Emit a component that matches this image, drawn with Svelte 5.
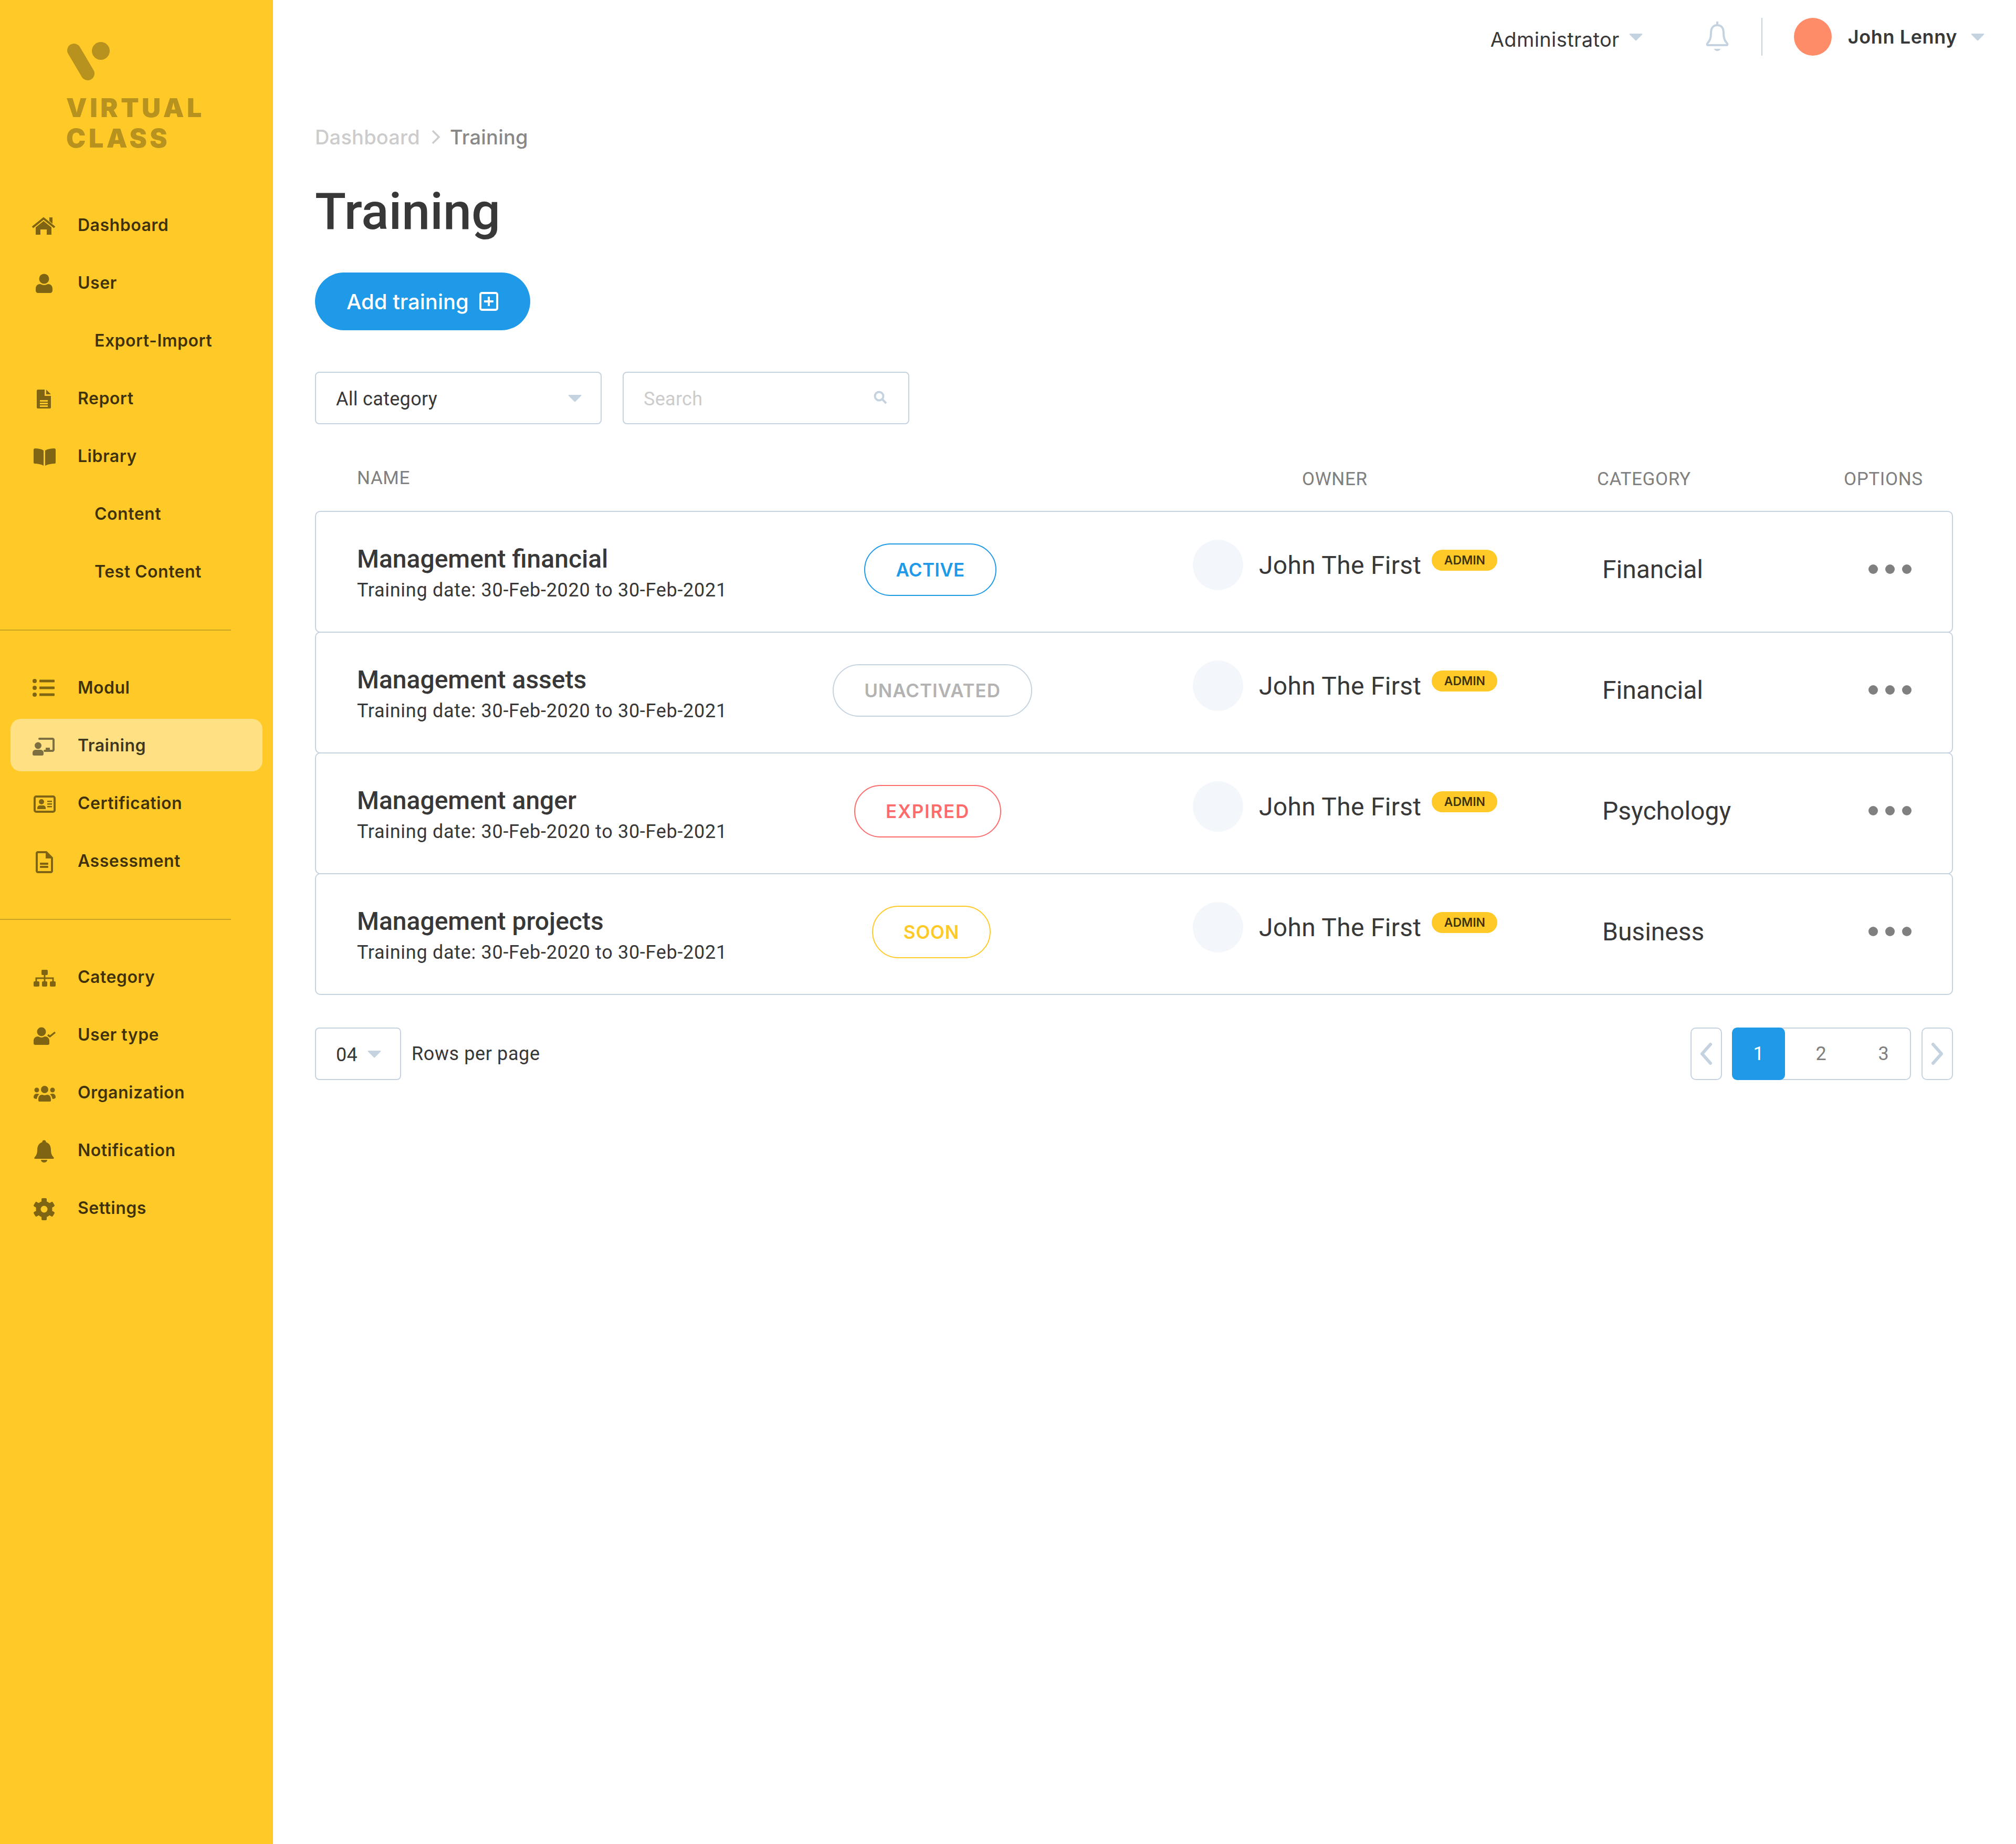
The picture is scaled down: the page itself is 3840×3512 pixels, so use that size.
<script lang="ts">
    const icons: Record<string, string> = {
        home: '<path d="M2 29 23 12l21 17" fill="none" stroke="currentColor" stroke-width="4"/><path d="M34 10h6v12l-6-5zM23 17l15 12v14H29V33H17v10H8V29z"/>',
        user: '<circle cx="24" cy="17" r="9.500"/><path d="M8 36c0-6 4-9 8-9 2 0 4 2 8 2s6-2 8-2c4 0 8 3 8 9v3c0 3-2 5-5 5H13c-3 0-5-2-5-5z"/>',
        report: '<path fill-rule="evenodd" d="M12 8h13v12h12v22c0 1-1 2-2 2H12c-1 0-2-1-2-2V10c0-1 1-2 2-2zm4 20v3h15v-3zm0 5v3h15v-3zm0 5v3h15v-3z"/><path d="M28 8l9 9h-9z"/>',
        book: '<path d="M4 13c0-2 1-3 3-3 6 0 12 1 16 4v29c-5-3-11-4-17-4-1 0-2-1-2-2zM46 13c0-2-1-3-3-3-6 0-12 1-17 4v29c6-3 12-4 18-4 1 0 2-1 2-2z"/>',
        list: '<circle cx="6" cy="12" r="4"/><circle cx="6" cy="25" r="4"/><circle cx="6" cy="38" r="4"/><rect x="15" y="9.500" width="29" height="5" rx="1"/><rect x="15" y="22.500" width="29" height="5" rx="1"/><rect x="15" y="35.500" width="29" height="5" rx="1"/>',
        training: '<circle cx="12.500" cy="25" r="6.500"/><path d="M2 39c0-4 3-6 6-6h9c3 0 6 2 6 6v2c0 2-1 3-3 3H5c-2 0-3-1-3-3z"/><path d="M15 12h25c1 0 2 1 2 2v19c0 1-1 2-2 2H25" fill="none" stroke="currentColor" stroke-width="4" stroke-linecap="round"/><rect x="27" y="29" width="8" height="6"/>',
        cert: '<rect x="6" y="12" width="38" height="29" rx="3" fill="none" stroke="currentColor" stroke-width="4"/><circle cx="19" cy="22" r="5"/><path d="M11 34c0-3 2-5 5-5h6c3 0 5 2 5 5v2H11z"/><path d="M30 20h9v2.500h-9zM30 25h9v2.500h-9zM30 30h9v2.500h-9z"/>',
        assess: '<path d="M12 8h16l11 11v25c0 1-1 2-2 2H12c-1 0-2-1-2-2V10c0-1 1-2 2-2z" fill="none" stroke="currentColor" stroke-width="4" stroke-linejoin="round"/><path d="M27 8l12 12H27z"/><rect x="16" y="28" width="16" height="4" rx="1"/><rect x="16" y="34" width="16" height="4" rx="1"/>',
        category: '<rect x="19" y="11" width="12" height="10" rx="2"/><rect x="4" y="33" width="11" height="10" rx="2"/><rect x="20" y="33" width="10" height="10" rx="2"/><rect x="35" y="33" width="11" height="10" rx="2"/><path d="M9 33v-6h32v6M25 21v12" fill="none" stroke="currentColor" stroke-width="3"/>',
        usertype: '<circle cx="19" cy="19" r="8.500"/><path d="M4 36c0-5 4-8 8-8 2 0 4 2 7 2s5-2 7-2c4 0 8 3 8 8v5c0 2-1 3-3 3H7c-2 0-3-1-3-3z"/><path d="M31 25l4 3 10-8" fill="none" stroke="currentColor" stroke-width="3.500"/>',
        org: '<circle cx="25" cy="19" r="7"/><circle cx="10" cy="20" r="4.500"/><circle cx="40" cy="20" r="4.500"/><path d="M13 38c0-6 3-9 7-9 2 0 3 1 5 1s3-1 5-1c4 0 7 3 7 9v2c0 1-1 2-2 2H15c-1 0-2-1-2-2z"/><path d="M4 34c0-4 2-7 6-7 2 0 4 1 5 1-3 2-4 5-5 9-3 0-6-1-6-3zM46 34c0-4-2-7-6-7-2 0-4 1-5 1 3 2 4 5 5 9 3 0 6-1 6-3z"/>',
        bell: '<circle cx="24" cy="9" r="3.500"/><path d="M24 9c9 0 13 7 13 15 0 7 2 11 5 14 1 1 1 3-1 3H7c-2 0-2-2-1-3 3-3 5-7 5-14 0-8 4-15 13-15z"/><path d="M18 43h12c0 3-3 5-6 5s-6-2-6-5z"/>',
        gear: '<circle cx="24" cy="27" r="11" fill="none" stroke="currentColor" stroke-width="9"/><rect x="19" y="6" width="10" height="42" rx="2"/><rect x="19" y="6" width="10" height="42" rx="2" transform="rotate(60 24 27)"/><rect x="19" y="6" width="10" height="42" rx="2" transform="rotate(120 24 27)"/><circle cx="24" cy="27" r="6.500" fill="#FFCA28"/>'
    };

    const navGroups = [
        [
            { label: 'Dashboard', icon: 'home' },
            { label: 'User', icon: 'user' },
            { label: 'Export-Import', sub: true },
            { label: 'Report', icon: 'report' },
            { label: 'Library', icon: 'book' },
            { label: 'Content', sub: true },
            { label: 'Test Content', sub: true }
        ],
        [
            { label: 'Modul', icon: 'list' },
            { label: 'Training', icon: 'training', active: true },
            { label: 'Certification', icon: 'cert' },
            { label: 'Assessment', icon: 'assess' }
        ],
        [
            { label: 'Category', icon: 'category' },
            { label: 'User type', icon: 'usertype' },
            { label: 'Organization', icon: 'org' },
            { label: 'Notification', icon: 'bell' },
            { label: 'Settings', icon: 'gear' }
        ]
    ];

    const trainings = [
        { name: 'Management financial', status: 'ACTIVE', kind: 'active', category: 'Financial' },
        { name: 'Management assets', status: 'UNACTIVATED', kind: 'unactivated', category: 'Financial' },
        { name: 'Management anger', status: 'EXPIRED', kind: 'expired', category: 'Psychology' },
        { name: 'Management projects', status: 'SOON', kind: 'soon', category: 'Business' }
    ];
</script>

{#snippet caret()}
    <svg class="caret" viewBox="0 0 28 16"><path d="M2 1h24c1 0 2 1 1 2L15 15c-.6.6-1.400.6-2 0L1 3C0 2 1 1 2 1z" /></svg>
{/snippet}

<div class="page">
    <aside class="sidebar">
        <div class="logo">
            <svg class="logo-mark" viewBox="0 0 90 80">
                <path d="M13 16 39 60" stroke="#B8921E" stroke-width="26" stroke-linecap="round" />
                <circle cx="64" cy="17" r="17" fill="#B8921E" />
            </svg>
            <div class="logo-text">VIRTUAL<br />CLASS</div>
        </div>

        {#each navGroups as group, i}
            <nav class="group" class:first={i === 0}>
                {#each group as item}
                    <div class="item" class:active={item.active} class:sub={item.sub}>
                        {#if item.icon}
                            <svg class="icon" viewBox="0 0 48 48">{@html icons[item.icon]}</svg>
                        {/if}
                        <span>{item.label}</span>
                    </div>
                {/each}
            </nav>
        {/each}
    </aside>

    <main class="main">
        <header class="topbar">
            <span class="role">Administrator</span>
            {@render caret()}
            <svg class="top-bell" viewBox="0 0 48 60" fill="none" stroke="#C5D3E0" stroke-width="4">
                <path d="M24 3v7M24 10c-9 0-12 7-12 15 0 10-2 14-7 20-1 2 0 3 1 3h36c1 0 2-1 1-3-5-6-7-10-7-20 0-8-3-15-12-15z" />
                <path d="M18 55h12c0 2-3 4-6 4s-6-2-6-4z" fill="#C5D3E0" stroke="none" />
            </svg>
            <div class="vline"></div>
            <div class="avatar"></div>
            <span class="username">John Lenny</span>
            {@render caret()}
        </header>

        <div class="crumbs">
            <span class="crumb-prev">Dashboard</span>
            <svg class="crumb-sep" viewBox="0 0 18 28" fill="none" stroke="#ccc" stroke-width="3.500"><path d="M3 2l12 12L3 26" /></svg>
            <span class="crumb-now">Training</span>
        </div>

        <h1>Training</h1>

        <button class="add">
            Add training
            <svg viewBox="0 0 36 36" fill="none" stroke="#fff" stroke-width="4"><rect x="2" y="2" width="32" height="32" rx="3" /><path d="M18 9v18M9 18h18" /></svg>
        </button>

        <div class="filters">
            <div class="field">
                <span class="value">All category</span>
                {@render caret()}
            </div>
            <div class="field search-field">
                <span class="value placeholder">Search</span>
                <svg class="search" viewBox="0 0 26 26" fill="none" stroke="#C5D3E0" stroke-width="4"><circle cx="10.500" cy="10.500" r="8" /><path d="M16.500 16.500 24 24" /></svg>
            </div>
        </div>

        <div class="thead">
            <span class="th-name">NAME</span>
            <span class="th-owner">OWNER</span>
            <span class="th-cat">CATEGORY</span>
            <span>OPTIONS</span>
        </div>

        <div class="rows">
            {#each trainings as t}
                <div class="row">
                    <div class="name-cell">
                        <div class="title">{t.name}</div>
                        <div class="date">Training date: 30-Feb-2020 to 30-Feb-2021</div>
                    </div>
                    <div class="status-cell">
                        <span class="pill {t.kind}">{t.status}</span>
                    </div>
                    <div class="owner">
                        <div class="owner-pic"></div>
                        <span class="owner-name">John The First</span>
                        <span class="tag">ADMIN</span>
                    </div>
                    <div class="category">{t.category}</div>
                    <div class="dots"><i></i><i></i><i></i></div>
                </div>
            {/each}
        </div>

        <footer class="tfoot">
            <div class="field small">
                <span class="value">04</span>
                {@render caret()}
            </div>
            <span class="rows-label">Rows per page</span>
            <div class="pager">
                <div class="arrow">
                    <svg viewBox="0 0 24 44" fill="none" stroke="#C5D3E0" stroke-width="6" stroke-linecap="round" stroke-linejoin="round"><path d="M20 4 4 22l16 18" /></svg>
                </div>
                <div class="pages">
                    <span class="num current">1</span>
                    <span class="num">2</span>
                    <span class="num">3</span>
                </div>
                <div class="arrow">
                    <svg viewBox="0 0 24 44" fill="none" stroke="#C5D3E0" stroke-width="6" stroke-linecap="round" stroke-linejoin="round"><path d="M4 4l16 18L4 40" /></svg>
                </div>
            </div>
        </footer>
    </main>
</div>

<style>
    :global(body) {
        margin: 0;
        background: #fff;
        font-family: Roboto, "Liberation Sans", sans-serif;
        color: #383838;
    }

    .page {
        display: flex;
        min-height: 3512px;
    }

    .sidebar {
        flex: 0 0 520px;
        background: #FFCA28;
    }

    .logo {
        padding: 80px 0 0 128px;
        height: 298px;
    }

    .logo-mark {
        display: block;
        width: 90px;
        height: 80px;
        overflow: visible;
    }

    .logo-text {
        margin: 16px 0 0 -2px;
        font: 900 50px/58px Inter, sans-serif;
        letter-spacing: 5.500px;
        color: #B8921E;
    }

    .group {
        padding: 59px 20px 62px;
        display: flex;
        flex-direction: column;
        gap: 10px;
        position: relative;
    }

    .group + .group::before {
        content: "";
        position: absolute;
        top: -1px;
        left: 0;
        width: 440px;
        height: 2px;
        background: #C9A227;
    }

    .group.first {
        padding-top: 0;
    }

    .item {
        height: 100px;
        display: flex;
        align-items: center;
        border-radius: 20px;
        padding-left: 40px;
        font: 600 32px Inter, sans-serif;
        letter-spacing: 0.5px;
        color: rgba(0, 0, 0, 0.76);
    }

    .item.sub {
        padding-left: 160px;
    }

    .item.active {
        background: #FFE082;
    }

    .icon {
        width: 48px;
        height: 48px;
        margin-right: 40px;
        color: #000;
        fill: currentColor;
        opacity: 0.5;
        overflow: visible;
    }

    .main {
        flex: 1;
        padding: 0 120px 0 80px;
        min-width: 0;
    }

    .topbar {
        height: 140px;
        margin-right: -60px;
        display: flex;
        align-items: center;
        justify-content: flex-end;
        font: 500 36px Inter, sans-serif;
    }

    .role {
        font-size: 38px;
        font-weight: 400;
        letter-spacing: 0.4px;
        margin-top: 10px;
    }

    .username {
        font-weight: 600;
        letter-spacing: 0.6px;
        margin-left: 31px;
        margin-right: 26px;
    }

    .caret {
        width: 26px;
        height: 15px;
        fill: #C5D3E0;
    }

    .role + .caret {
        margin-left: 18px;
    }

    .top-bell {
        width: 48px;
        height: 60px;
        margin-left: 118px;
        margin-top: -4px;
    }

    .vline {
        width: 2px;
        height: 72px;
        background: #C5D3E0;
        margin-left: 60px;
        margin-right: 60px;
    }

    .avatar {
        width: 72px;
        height: 72px;
        border-radius: 50%;
        background: #FF8C69;
    }

    .crumbs {
        margin-top: 96px;
        height: 50px;
        display: flex;
        align-items: center;
        font: 500 38px Inter, sans-serif;
        letter-spacing: 0.2px;
    }

    .crumb-prev {
        color: #ccc;
    }

    .crumb-sep {
        width: 18px;
        height: 28px;
        margin: 0 18px 0 21px;
    }

    .crumb-now {
        color: #888;
    }

    h1 {
        margin: 57px 0 0;
        font: 500 97px/120px Roboto, sans-serif;
        color: #383838;
    }

    .add {
        display: flex;
        align-items: center;
        gap: 20px;
        margin-top: 56px;
        height: 110px;
        width: 410px;
        padding: 0 0 0 60px;
        border: none;
        border-radius: 55px;
        background: #1E9AE8;
        color: #fff;
        font: 500 40px Inter, sans-serif;
    }

    .add svg {
        width: 36px;
        height: 36px;
    }

    .filters {
        display: flex;
        gap: 40px;
        margin-top: 79px;
    }

    .field {
        box-sizing: border-box;
        width: 546px;
        height: 100px;
        display: flex;
        align-items: center;
        justify-content: space-between;
        padding: 0 36px 0 38px;
        border: 2.500px solid #C5D3E0;
        border-radius: 8px;
        font-size: 36px;
        letter-spacing: 0.3px;
    }

    .field .value {
        margin-top: 4px;
    }

    .search-field {
        padding-right: 40px;
    }

    .field.small {
        width: 164px;
        padding-right: 36px;
    }

    .placeholder {
        color: #ccc;
    }

    .search {
        width: 26px;
        height: 26px;
        margin-top: -2px;
    }

    .thead {
        display: flex;
        height: 165px;
        box-sizing: border-box;
        padding: 85px 0 0 80px;
        font-size: 35px;
        letter-spacing: 0.6px;
        line-height: 40px;
        color: #808080;
    }

    .th-name {
        width: 1800px;
        margin-top: -2px;
    }

    .th-owner {
        width: 562px;
    }

    .th-cat {
        width: 470px;
    }

    .row {
        box-sizing: border-box;
        height: 232px;
        margin-bottom: -2px;
        display: grid;
        grid-template-columns: 892px 700px 780px 507px auto;
        align-items: center;
        padding-left: 78px;
        border: 2.500px solid #C5D3E0;
        border-radius: 10px;
    }

    .name-cell {
        margin-top: 11px;
    }

    .title {
        font-size: 48px;
        font-weight: 500;
        line-height: 56px;
        margin-top: -6px;
    }

    .date {
        font-size: 36px;
        letter-spacing: 0.7px;
        line-height: 44px;
        margin-top: 9px;
    }

    .status-cell {
        width: 400px;
        display: flex;
        justify-content: center;
        margin-top: -9px;
    }

    .pill {
        box-sizing: border-box;
        height: 100px;
        padding: 0 58px;
        display: flex;
        align-items: center;
        border-radius: 50px;
        border: 2.500px solid currentColor;
        font: 600 35px Inter, sans-serif;
    }

    .pill.active {
        color: #1E9AE8;
        letter-spacing: 0.3px;
    }

    .pill.unactivated {
        color: #b3b3b3;
        border-color: #C5D3E0;
        letter-spacing: 0.9px;
        margin-left: 8px;
    }

    .pill.expired {
        color: #FF6B6B;
        letter-spacing: 1.700px;
        margin-right: 10px;
    }

    .pill.soon {
        color: #FFCA28;
        letter-spacing: 0.8px;
        margin-left: 4px;
    }

    .owner {
        display: flex;
        align-items: center;
        margin-top: -26px;
    }

    .owner-pic {
        flex: none;
        width: 96px;
        height: 96px;
        border-radius: 50%;
        background: #F3F7FB;
    }

    .owner-name {
        margin-left: 30px;
        font-size: 48px;
        letter-spacing: 0.3px;
        white-space: nowrap;
    }

    .tag {
        flex: none;
        margin: -18px 0 0 20px;
        width: 125px;
        height: 40px;
        border-radius: 20px;
        background: #FFCA28;
        color: rgba(0, 0, 0, 0.76);
        display: flex;
        align-items: center;
        justify-content: center;
        font: 600 23px Inter, sans-serif;
    }

    .category {
        font-size: 48px;
        margin-top: -10px;
    }

    .dots {
        display: flex;
        gap: 14px;
        margin-top: -10px;
    }

    .dots i {
        width: 18px;
        height: 18px;
        border-radius: 50%;
        background: #808080;
    }

    .tfoot {
        display: flex;
        align-items: center;
        margin-top: 64px;
    }

    .rows-label {
        margin-left: 20px;
        font-size: 36px;
        letter-spacing: 0.6px;
    }

    .pager {
        margin-left: auto;
        display: flex;
        gap: 20px;
    }

    .arrow {
        box-sizing: border-box;
        width: 60px;
        height: 100px;
        display: flex;
        align-items: center;
        justify-content: center;
        border: 2.500px solid #C5D3E0;
        border-radius: 10px;
    }

    .arrow svg {
        width: 24px;
        height: 44px;
    }

    .pages {
        box-sizing: border-box;
        display: flex;
        height: 100px;
        border: 2.500px solid #C5D3E0;
        border-radius: 10px;
    }

    .num {
        box-sizing: border-box;
        width: 119px;
        padding-left: 18px;
        display: flex;
        align-items: center;
        justify-content: center;
        font-size: 36px;
        color: #808080;
    }

    .num.current {
        width: 101px;
        height: 100px;
        padding-left: 0;
        margin: -2.500px 0 -2.500px -2.500px;
        background: #1E9AE8;
        color: #fff;
        border-radius: 10px;
    }
</style>
